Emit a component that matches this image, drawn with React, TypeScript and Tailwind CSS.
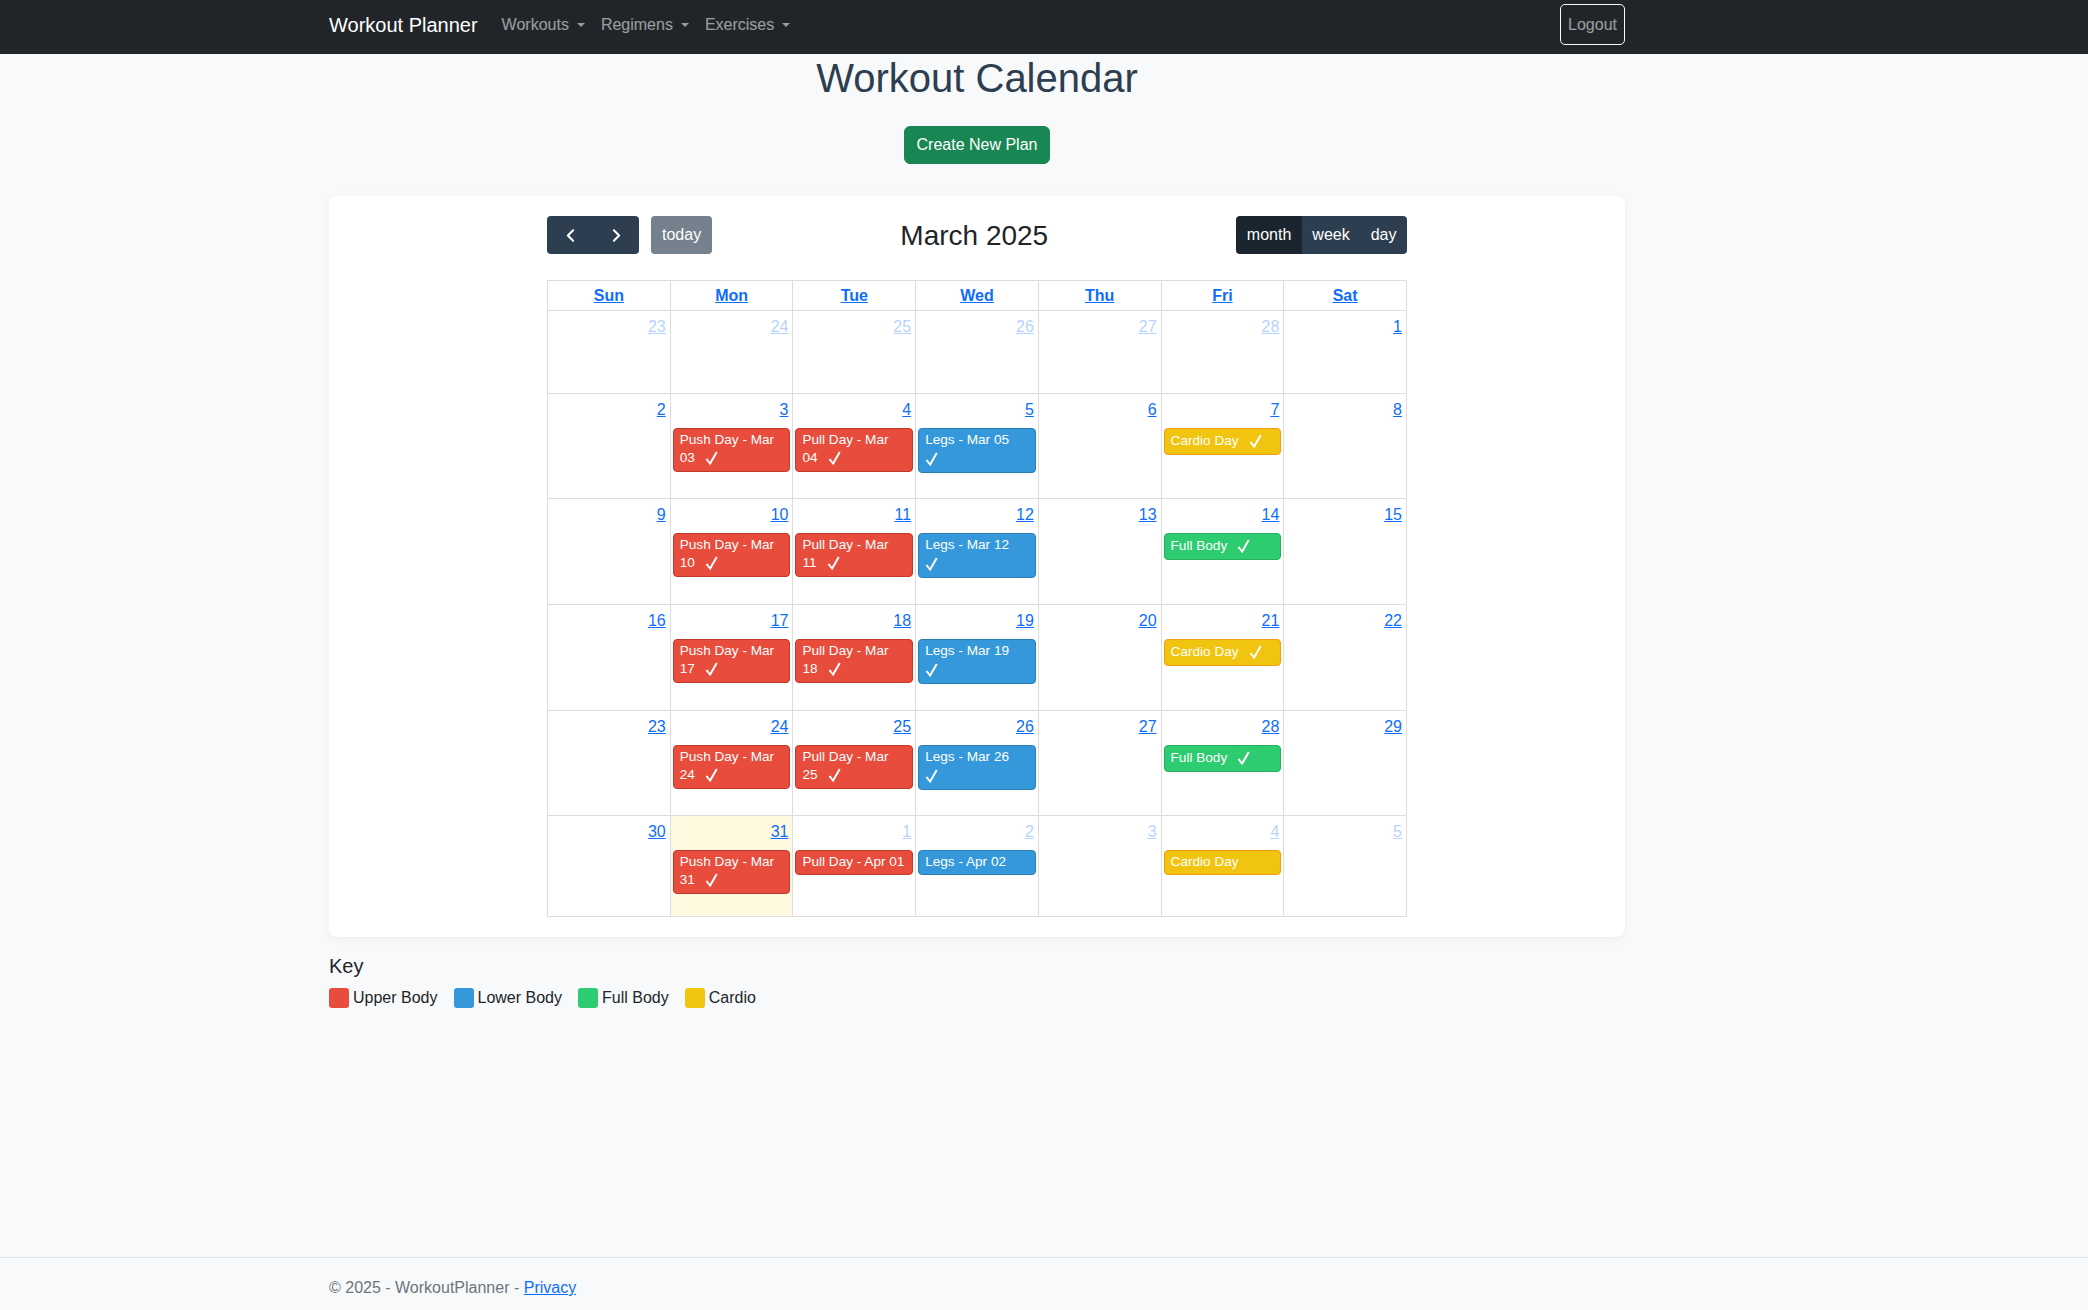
import React from 'react';
import { ChevronLeft, ChevronRight } from 'lucide-react';

type Kind = 'upper' | 'lower' | 'full' | 'cardio';

type CalEvent = {
    kind: Kind;
    lines: string[];
    done?: boolean;
    checkOwnLine?: boolean;
};

type Day = {
    n: number;
    other?: boolean;
    today?: boolean;
    event?: CalEvent;
};

const kindStyle: Record<Kind, string> = {
    upper: 'bg-[#e74c3c] border-[#c0392b]',
    lower: 'bg-[#3498db] border-[#2980b9]',
    full: 'bg-[#2ecc71] border-[#27ae60]',
    cardio: 'bg-[#f1c40f] border-[#f39c12]',
};

const push = (d: string): CalEvent => ({ kind: 'upper', lines: ['Push Day - Mar', d], done: true });
const pull = (d: string): CalEvent => ({ kind: 'upper', lines: ['Pull Day - Mar', d], done: true });
const legs = (d: string): CalEvent => ({ kind: 'lower', lines: ['Legs - Mar ' + d], done: true, checkOwnLine: true });
const cardio: CalEvent = { kind: 'cardio', lines: ['Cardio Day'], done: true };
const fullBody: CalEvent = { kind: 'full', lines: ['Full Body'], done: true };

const weeks: { h: string; days: Day[] }[] = [
    {
        h: 'h-[83px]',
        days: [
            { n: 23, other: true },
            { n: 24, other: true },
            { n: 25, other: true },
            { n: 26, other: true },
            { n: 27, other: true },
            { n: 28, other: true },
            { n: 1 },
        ],
    },
    {
        h: 'h-[105px]',
        days: [
            { n: 2 },
            { n: 3, event: push('03') },
            { n: 4, event: pull('04') },
            { n: 5, event: legs('05') },
            { n: 6 },
            { n: 7, event: cardio },
            { n: 8 },
        ],
    },
    {
        h: 'h-[106px]',
        days: [
            { n: 9 },
            { n: 10, event: push('10') },
            { n: 11, event: pull('11') },
            { n: 12, event: legs('12') },
            { n: 13 },
            { n: 14, event: fullBody },
            { n: 15 },
        ],
    },
    {
        h: 'h-[106px]',
        days: [
            { n: 16 },
            { n: 17, event: push('17') },
            { n: 18, event: pull('18') },
            { n: 19, event: legs('19') },
            { n: 20 },
            { n: 21, event: cardio },
            { n: 22 },
        ],
    },
    {
        h: 'h-[105px]',
        days: [
            { n: 23 },
            { n: 24, event: push('24') },
            { n: 25, event: pull('25') },
            { n: 26, event: legs('26') },
            { n: 27 },
            { n: 28, event: fullBody },
            { n: 29 },
        ],
    },
    {
        h: 'h-[101px]',
        days: [
            { n: 30 },
            { n: 31, today: true, event: push('31') },
            { n: 1, other: true, event: { kind: 'upper', lines: ['Pull Day - Apr 01'] } },
            { n: 2, other: true, event: { kind: 'lower', lines: ['Legs - Apr 02'] } },
            { n: 3, other: true },
            { n: 4, other: true, event: { kind: 'cardio', lines: ['Cardio Day'] } },
            { n: 5, other: true },
        ],
    },
];

const dayNames = ['Sun', 'Mon', 'Tue', 'Wed', 'Thu', 'Fri', 'Sat'];

const Check = ({ className = '' }: { className?: string }) => (
    <svg width="13" height="15" viewBox="0 0 13 15" className={className}>
        <path d="M0.6 8.6 L2.5 7.5 L4.8 10.9 L10.9 0.6 L12.6 1.6 L5.3 14.3 Z" fill="white" />
    </svg>
);

const EventChip = ({ ev }: { ev: CalEvent }) => {
    const last = ev.lines.length - 1;
    return (
        <div className={`mx-[2px] border rounded-[4px] px-[6px] py-[3px] text-white text-[13.6px] ${kindStyle[ev.kind]}`}>
            {ev.lines.map((line, i) => (
                <div
                    key={i}
                    className={`flex items-center whitespace-nowrap ${ev.done && i === last && !ev.checkOwnLine ? 'h-[19px]' : 'h-[17px]'}`}
                >
                    {line}
                    {ev.done && i === last && !ev.checkOwnLine && <Check className="ml-[10px]" />}
                </div>
            ))}
            {ev.done && ev.checkOwnLine && (
                <div className="flex items-center h-[20px]">
                    <Check />
                </div>
            )}
        </div>
    );
};

const NavDrop = ({ label }: { label: string }) => (
    <a href="#" className="px-2 text-[16px] leading-6 text-white/55 flex items-center">
        {label}
        <span className="inline-block ml-[8px] mt-[1px] border-t-[4.8px] border-x-[4.8px] border-x-transparent border-t-current" />
    </a>
);

const App = () => {
    return (
        <div className="min-h-screen flex flex-col bg-[#f8f9fa] text-[#212529] font-['Liberation_Sans',Arial,sans-serif]">
            <nav className="h-[54px] bg-[#212529]">
                <div className="ml-[329px] w-[1296px] h-[49px] flex items-center">
                    <a href="#" className="text-[20px] leading-[30px] text-white mr-4">
                        Workout Planner
                    </a>
                    <NavDrop label="Workouts" />
                    <NavDrop label="Regimens" />
                    <NavDrop label="Exercises" />
                    <button className="ml-auto h-[41px] px-[7px] border border-[#f8f9fa] rounded-[5px] text-[16px] text-white/55">
                        Logout
                    </button>
                </div>
            </nav>

            <main className="flex-1">
                <div className="ml-[329px] w-[1296px]">
                    <h1 className="text-center text-[40px] leading-[48px] font-normal text-[#2c3e50] mb-6">
                        Workout Calendar
                    </h1>
                    <div className="flex justify-center">
                        <button className="h-[38px] px-3 rounded-[6px] bg-[#198754] border border-[#198754] text-white text-[16px]">
                            Create New Plan
                        </button>
                    </div>

                    <div className="mt-8 bg-white rounded-lg shadow-[0_2px_10px_rgba(0,0,0,0.05)] p-5">
                        <div className="w-[860px] mx-auto">
                            <div className="flex items-center justify-between h-[38px] mb-[26px]">
                                <div className="flex items-center">
                                    <div className="flex rounded-[4px] overflow-hidden bg-[#2c3e50] text-white">
                                        <button className="w-[46px] h-[38px] flex items-center justify-center">
                                            <ChevronLeft size={21} strokeWidth={2.4} />
                                        </button>
                                        <button className="w-[46px] h-[38px] flex items-center justify-center">
                                            <ChevronRight size={21} strokeWidth={2.4} />
                                        </button>
                                    </div>
                                    <button className="ml-3 h-[38px] px-[11px] rounded-[4px] bg-[#2c3e50] opacity-65 text-white text-[16px]">
                                        today
                                    </button>
                                </div>
                                <h2 className="text-[28px] leading-[34px] mt-[2px] text-[#212529]">March 2025</h2>
                                <div className="flex rounded-[4px] overflow-hidden text-white text-[16px]">
                                    <button className="h-[38px] px-[10.5px] bg-[#1a252f]">month</button>
                                    <button className="h-[38px] px-[10.5px] bg-[#2c3e50]">week</button>
                                    <button className="h-[38px] px-[10.5px] bg-[#2c3e50]">day</button>
                                </div>
                            </div>

                            <div className="border-l border-t border-[#ddd]">
                                <div className="grid grid-cols-7">
                                    {dayNames.map((d) => (
                                        <div key={d} className="h-[30px] border-r border-b border-[#ddd] flex justify-center items-center">
                                            <a href="#" className="font-bold text-[16px] leading-6 text-[#0d6efd] underline">
                                                {d}
                                            </a>
                                        </div>
                                    ))}
                                </div>
                                {weeks.map((w, wi) => (
                                    <div key={wi} className={`grid grid-cols-7 ${w.h}`}>
                                        {w.days.map((day, di) => (
                                            <div
                                                key={di}
                                                className={`border-r border-b border-[#ddd] ${day.today ? 'bg-[#fff9df]' : ''}`}
                                            >
                                                <div className={`flex justify-end px-1 pt-1 ${day.other ? 'opacity-30' : ''}`}>
                                                    <a href="#" className="text-[16px] leading-6 text-[#0d6efd] underline">
                                                        {day.n}
                                                    </a>
                                                </div>
                                                {day.event && (
                                                    <div className="mt-[6px]">
                                                        <EventChip ev={day.event} />
                                                    </div>
                                                )}
                                            </div>
                                        ))}
                                    </div>
                                ))}
                            </div>
                        </div>
                    </div>

                    <h5 className="mt-[17px] mb-2 text-[20px] leading-6">Key</h5>
                    <div className="flex items-center text-[16px] leading-6">
                        <span className="w-5 h-5 rounded-[3px] bg-[#e74c3c] mr-1" />
                        <span className="mr-4">Upper Body</span>
                        <span className="w-5 h-5 rounded-[3px] bg-[#3498db] mr-1" />
                        <span className="mr-4">Lower Body</span>
                        <span className="w-5 h-5 rounded-[3px] bg-[#2ecc71] mr-1" />
                        <span className="mr-4">Full Body</span>
                        <span className="w-5 h-5 rounded-[3px] bg-[#f1c40f] mr-1" />
                        <span>Cardio</span>
                    </div>
                </div>
            </main>

            <footer className="h-[53px] border-t border-[#dee2e6] overflow-hidden">
                <div className="ml-[329px] w-[1296px] text-[16px] leading-[60px] text-[#6c757d] whitespace-nowrap">
                    © 2025 - WorkoutPlanner -{' '}
                    <a href="#" className="text-[#0d6efd] underline">
                        Privacy
                    </a>
                </div>
            </footer>
        </div>
    );
};

export default App;
